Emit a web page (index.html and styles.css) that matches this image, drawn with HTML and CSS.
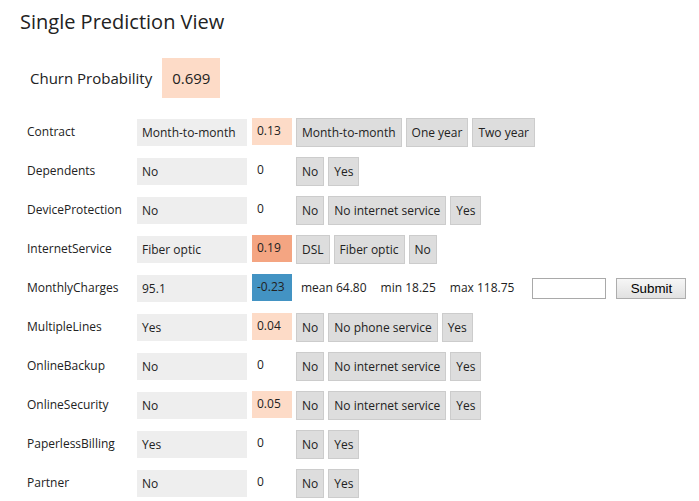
FILE: index.html
```html
<!DOCTYPE html>
<html>
<head>
<meta charset="utf-8">
<link rel="stylesheet" href="styles.css">
</head>
<body>
<div class="page">
  <h1 class="title">Single Prediction View</h1>
  <div class="churn">
    <span class="churn-label">Churn Probability</span>
    <span class="churn-value pos-light">0.699</span>
  </div>
  <div class="rows">
    <div class="row">
      <span class="label">Contract</span>
      <span class="value">Month-to-month</span>
      <span class="score pos-light">0.13</span>
      <span class="btn">Month-to-month</span><span class="btn">One year</span><span class="btn">Two year</span>
    </div>
    <div class="row">
      <span class="label">Dependents</span>
      <span class="value">No</span>
      <span class="score">0</span>
      <span class="btn">No</span><span class="btn">Yes</span>
    </div>
    <div class="row">
      <span class="label">DeviceProtection</span>
      <span class="value">No</span>
      <span class="score">0</span>
      <span class="btn">No</span><span class="btn">No internet service</span><span class="btn">Yes</span>
    </div>
    <div class="row">
      <span class="label">InternetService</span>
      <span class="value">Fiber optic</span>
      <span class="score pos-mid">0.19</span>
      <span class="btn">DSL</span><span class="btn">Fiber optic</span><span class="btn">No</span>
    </div>
    <div class="row">
      <span class="label">MonthlyCharges</span>
      <span class="value">95.1</span>
      <span class="score neg">-0.23</span>
      <span class="stat first">mean 64.80</span>
      <span class="stat">min 18.25</span>
      <span class="stat">max 118.75</span>
      <input class="num-input" type="text">
      <button class="submit">Submit</button>
    </div>
    <div class="row">
      <span class="label">MultipleLines</span>
      <span class="value">Yes</span>
      <span class="score pos-light">0.04</span>
      <span class="btn">No</span><span class="btn">No phone service</span><span class="btn">Yes</span>
    </div>
    <div class="row">
      <span class="label">OnlineBackup</span>
      <span class="value">No</span>
      <span class="score">0</span>
      <span class="btn">No</span><span class="btn">No internet service</span><span class="btn">Yes</span>
    </div>
    <div class="row">
      <span class="label">OnlineSecurity</span>
      <span class="value">No</span>
      <span class="score pos-light">0.05</span>
      <span class="btn">No</span><span class="btn">No internet service</span><span class="btn">Yes</span>
    </div>
    <div class="row">
      <span class="label">PaperlessBilling</span>
      <span class="value">Yes</span>
      <span class="score">0</span>
      <span class="btn">No</span><span class="btn">Yes</span>
    </div>
    <div class="row">
      <span class="label">Partner</span>
      <span class="value">No</span>
      <span class="score">0</span>
      <span class="btn">No</span><span class="btn">Yes</span>
    </div>
  </div>
</div>
</body>
</html>
```
FILE: styles.css
```css
html, body {
  margin: 0;
  padding: 0;
  background: #fff;
}
body {
  font-family: "Open Sans", "Liberation Sans", sans-serif;
  color: #222;
  font-size: 12px;
}
.page {
  padding: 8px 0 0 20px;
}
.title {
  margin: 0;
  font-size: 20px;
  font-weight: 400;
  line-height: 27px;
}
.churn {
  display: flex;
  align-items: center;
  margin: 23px 0 20px 10px;
}
.churn-label {
  font-size: 15px;
  margin-right: 10px;
}
.churn-value {
  font-size: 15px;
  height: 40px;
  line-height: 40px;
  padding: 0 10px;
}
.rows {
  margin-left: 7px;
}
.row {
  display: flex;
  align-items: flex-start;
  height: 29px;
  margin-bottom: 10px;
}
.label {
  width: 110px;
  line-height: 28px;
}
.value {
  width: 105px;
  padding-left: 5px;
  height: 27px;
  line-height: 28px;
  margin-top: 1px;
  background: #eee;
}
.score {
  width: 35px;
  padding-left: 5px;
  height: 27px;
  line-height: 26px;
  margin-left: 5px;
  margin-right: 4px;
}
.pos-light { background: #fddbc7; }
.pos-mid { background: #f4a582; }
.neg { background: #4393c3; }
.btn {
  height: 27px;
  line-height: 28px;
  padding: 0 5px;
  border: 1px solid #ccc;
  background: #ddd;
  margin-right: 4px;
}
.stat {
  line-height: 27px;
  margin-left: 14px;
}
.stat.first {
  margin-left: 5px;
}
.num-input {
  box-sizing: border-box;
  width: 74px;
  height: 21px;
  margin: 4px 0 0 18px;
  border: 1px solid #a9a9a9;
  padding: 0;
}
.submit {
  box-sizing: border-box;
  width: 70px;
  height: 21px;
  margin: 4px 0 0 10px;
  font-family: "Liberation Sans", Arial, sans-serif;
  font-size: 13.33px;
  color: #000;
  border: 1px solid #adadad;
  background: linear-gradient(#f6f6f6, #e1e1e1);
  padding: 0;
}
```
